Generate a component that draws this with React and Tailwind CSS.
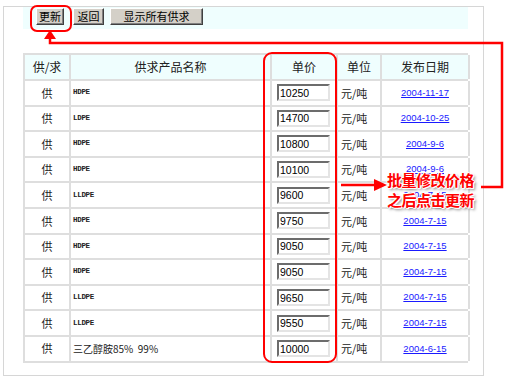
import React from 'react';

const rows = [
  ['HDPE', '10250', '2004-11-17'],
  ['LDPE', '14700', '2004-10-25'],
  ['HDPE', '10800', '2004-9-6'],
  ['HDPE', '10100', '2004-9-6'],
  ['LLDPE', '9600', '2004-7-15'],
  ['HDPE', '9750', '2004-7-15'],
  ['HDPE', '9050', '2004-7-15'],
  ['HDPE', '9050', '2004-7-15'],
  ['LLDPE', '9650', '2004-7-15'],
  ['LLDPE', '9550', '2004-7-15'],
  ['三乙醇胺85%  99%', '10000', '2004-6-15'],
];

const cjk = "font-['SimSun','Noto_Sans_CJK_SC',sans-serif]";
const cols = 'grid grid-cols-[46px_201px_66px_44px_88px]';
const cell = 'border-r-2 border-[#dedede] flex items-center';

function Btn({ children, className }) {
  return (
    <button
      className={`h-[17px] bg-[#d4d0c8] border border-t-white border-l-white border-b-[#404040] border-r-[#404040] shadow-[inset_-1px_-1px_0_#808080] text-[11px] leading-none text-black ${className}`}
    >
      {children}
    </button>
  );
}

export default function App() {
  return (
    <div className={`relative w-[507px] h-[383px] bg-white overflow-hidden ${cjk}`}>
      <div className="pt-[6px] pl-[3px]">
        <div className="w-[481px] h-[370px] border border-[#d6d6d6] pl-[19px]">
          {/* toolbar */}
          <div className="w-[445px] h-[22px] bg-[#effefe] flex items-start pt-[1px]">
            <Btn className="ml-[13px] w-[28px]">更新</Btn>
            <Btn className="ml-[9px] w-[31px]">返回</Btn>
            <Btn className="ml-[6px] w-[93px]">显示所有供求</Btn>
          </div>

          {/* table */}
          <div className="mt-[24px] w-[445px] border-t-2 border-l-2 border-[#dedede]">
            <div className={`${cols} h-[26px] bg-[#effefe] border-b-2 border-[#dedede] text-[12px] text-[#222]`}>
              <div className={`${cell} justify-center`}>供/求</div>
              <div className={`${cell} justify-center`}>供求产品名称</div>
              <div className={`${cell} justify-center`}>单价</div>
              <div className={`${cell} justify-center`}>单位</div>
              <div className={`${cell} justify-center`}>发布日期</div>
            </div>
            {rows.map((r, i) => (
              <div key={i} className={`${cols} h-[25.6px] border-b-2 border-[#dedede] text-[11px] text-[#222]`}>
                <div className={`${cell} justify-center`}>供</div>
                <div className={`${cell} pl-[2px]`}>
                  {r[0].startsWith('三') ? (
                    <span className="text-[10px] whitespace-pre">{r[0]}</span>
                  ) : (
                    <span className="font-['Liberation_Mono',monospace] text-[7.5px] font-bold tracking-[-0.3px]">{r[0]}</span>
                  )}
                </div>
                <div className={`${cell} pl-[5px]`}>
                  <input
                    readOnly
                    value={r[1]}
                    className="w-[53px] h-[17px] bg-white border-2 border-t-[#6c6c6c] border-l-[#6c6c6c] border-b-[#e4e4e4] border-r-[#e4e4e4] px-[1px] font-['Liberation_Sans',sans-serif] text-[10.5px] text-black outline-none"
                  />
                </div>
                <div className={`${cell} pl-[3px]`}>元/吨</div>
                <div className={`${cell} justify-center`}>
                  <a href="#" className="font-['Liberation_Sans',sans-serif] text-[9.5px] text-[#1a1aff] underline">
                    {r[2]}
                  </a>
                </div>
              </div>
            ))}
          </div>
        </div>
      </div>

      {/* annotations */}
      <div className="absolute left-[30px] top-[5px] w-[42px] h-[27px] border-2 border-[#f00] rounded-[7px]" />
      <div className="absolute left-[263px] top-[52px] w-[74px] h-[311px] border-2 border-[#f00] rounded-[9px]" />
      <svg className="absolute inset-0 pointer-events-none" width="507" height="383">
        <path d="M50 38 V43 H502 V187 H481" fill="none" stroke="#f00" strokeWidth="2.5" />
        <polygon points="50,30 44,39 56,39" fill="#f00" />
        <path d="M341 185 H376" stroke="#f00" strokeWidth="2.5" />
        <polygon points="387,185 374,179 374,191" fill="#f00" />
      </svg>
      <div className="absolute left-[387px] top-[170px] text-[15px] leading-[20px] font-bold text-[#f00] tracking-[-0.5px] [text-shadow:1px_0_0_#fff,-1px_0_0_#fff,0_1px_0_#fff,0_-1px_0_#fff,1px_1px_0_#fff,-1px_-1px_0_#fff,2px_2px_3px_#777]">
        <div>批量修改价格</div>
        <div>之后点击更新</div>
      </div>
    </div>
  );
}
